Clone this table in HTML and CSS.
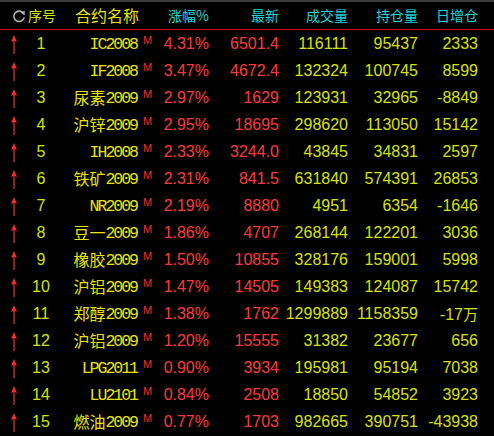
FILE: index.html
```html
<!DOCTYPE html>
<html>
<head>
<meta charset="utf-8">
<link rel="stylesheet" href="styles.css">
</head>
<body>
<div class="topbar"></div>
<div class="table">
  <div class="row head">
    <div class="c-arrow"><svg class="refresh" width="14" height="14" viewBox="0 0 14 14"><path d="M11.4 4.4 A5.2 5.2 0 1 0 12.2 8.4" fill="none" stroke="#b0b0b0" stroke-width="1.6"/><path d="M8.6 3.6 L12.8 1.8 L12.6 6.4 Z" fill="#b0b0b0"/></svg></div>
    <div class="c-idx">序号</div>
    <div class="c-name">合约名称</div>
    <div class="c-m"></div>
    <div class="c-pct">涨幅%</div>
    <div class="c-last">最新</div>
    <div class="c-vol">成交量</div>
    <div class="c-oi">持仓量</div>
    <div class="c-chg">日增仓</div>
  </div>
</div>
<div class="rows">
  <div class="row"><div class="c-arrow"><svg class="up" width="8" height="20" viewBox="0 0 8 20"><path d="M4 0 L7 7 L4.6 6 L4.6 19 L3.4 19 L3.4 6 L1 7 Z" fill="#f03030"/></svg></div><div class="c-idx">1</div><div class="c-name"><span class="a">IC2008</span></div><div class="c-m">M</div><div class="c-pct">4.31%</div><div class="c-last">6501.4</div><div class="c-vol">116111</div><div class="c-oi">95437</div><div class="c-chg">2333</div></div>
  <div class="row"><div class="c-arrow"><svg class="up" width="8" height="20" viewBox="0 0 8 20"><path d="M4 0 L7 7 L4.6 6 L4.6 19 L3.4 19 L3.4 6 L1 7 Z" fill="#f03030"/></svg></div><div class="c-idx">2</div><div class="c-name"><span class="a">IF2008</span></div><div class="c-m">M</div><div class="c-pct">3.47%</div><div class="c-last">4672.4</div><div class="c-vol">132324</div><div class="c-oi">100745</div><div class="c-chg">8599</div></div>
  <div class="row"><div class="c-arrow"><svg class="up" width="8" height="20" viewBox="0 0 8 20"><path d="M4 0 L7 7 L4.6 6 L4.6 19 L3.4 19 L3.4 6 L1 7 Z" fill="#f03030"/></svg></div><div class="c-idx">3</div><div class="c-name">尿素<span class="a">2009</span></div><div class="c-m">M</div><div class="c-pct">2.97%</div><div class="c-last">1629</div><div class="c-vol">123931</div><div class="c-oi">32965</div><div class="c-chg">-8849</div></div>
  <div class="row"><div class="c-arrow"><svg class="up" width="8" height="20" viewBox="0 0 8 20"><path d="M4 0 L7 7 L4.6 6 L4.6 19 L3.4 19 L3.4 6 L1 7 Z" fill="#f03030"/></svg></div><div class="c-idx">4</div><div class="c-name">沪锌<span class="a">2009</span></div><div class="c-m">M</div><div class="c-pct">2.95%</div><div class="c-last">18695</div><div class="c-vol">298620</div><div class="c-oi">113050</div><div class="c-chg">15142</div></div>
  <div class="row"><div class="c-arrow"><svg class="up" width="8" height="20" viewBox="0 0 8 20"><path d="M4 0 L7 7 L4.6 6 L4.6 19 L3.4 19 L3.4 6 L1 7 Z" fill="#f03030"/></svg></div><div class="c-idx">5</div><div class="c-name"><span class="a">IH2008</span></div><div class="c-m">M</div><div class="c-pct">2.33%</div><div class="c-last">3244.0</div><div class="c-vol">43845</div><div class="c-oi">34831</div><div class="c-chg">2597</div></div>
  <div class="row"><div class="c-arrow"><svg class="up" width="8" height="20" viewBox="0 0 8 20"><path d="M4 0 L7 7 L4.6 6 L4.6 19 L3.4 19 L3.4 6 L1 7 Z" fill="#f03030"/></svg></div><div class="c-idx">6</div><div class="c-name">铁矿<span class="a">2009</span></div><div class="c-m">M</div><div class="c-pct">2.31%</div><div class="c-last">841.5</div><div class="c-vol">631840</div><div class="c-oi">574391</div><div class="c-chg">26853</div></div>
  <div class="row"><div class="c-arrow"><svg class="up" width="8" height="20" viewBox="0 0 8 20"><path d="M4 0 L7 7 L4.6 6 L4.6 19 L3.4 19 L3.4 6 L1 7 Z" fill="#f03030"/></svg></div><div class="c-idx">7</div><div class="c-name"><span class="a">NR2009</span></div><div class="c-m">M</div><div class="c-pct">2.19%</div><div class="c-last">8880</div><div class="c-vol">4951</div><div class="c-oi">6354</div><div class="c-chg">-1646</div></div>
  <div class="row"><div class="c-arrow"><svg class="up" width="8" height="20" viewBox="0 0 8 20"><path d="M4 0 L7 7 L4.6 6 L4.6 19 L3.4 19 L3.4 6 L1 7 Z" fill="#f03030"/></svg></div><div class="c-idx">8</div><div class="c-name">豆一<span class="a">2009</span></div><div class="c-m">M</div><div class="c-pct">1.86%</div><div class="c-last">4707</div><div class="c-vol">268144</div><div class="c-oi">122201</div><div class="c-chg">3036</div></div>
  <div class="row"><div class="c-arrow"><svg class="up" width="8" height="20" viewBox="0 0 8 20"><path d="M4 0 L7 7 L4.6 6 L4.6 19 L3.4 19 L3.4 6 L1 7 Z" fill="#f03030"/></svg></div><div class="c-idx">9</div><div class="c-name">橡胶<span class="a">2009</span></div><div class="c-m">M</div><div class="c-pct">1.50%</div><div class="c-last">10855</div><div class="c-vol">328176</div><div class="c-oi">159001</div><div class="c-chg">5998</div></div>
  <div class="row"><div class="c-arrow"><svg class="up" width="8" height="20" viewBox="0 0 8 20"><path d="M4 0 L7 7 L4.6 6 L4.6 19 L3.4 19 L3.4 6 L1 7 Z" fill="#f03030"/></svg></div><div class="c-idx">10</div><div class="c-name">沪铝<span class="a">2009</span></div><div class="c-m">M</div><div class="c-pct">1.47%</div><div class="c-last">14505</div><div class="c-vol">149383</div><div class="c-oi">124087</div><div class="c-chg">15742</div></div>
  <div class="row"><div class="c-arrow"><svg class="up" width="8" height="20" viewBox="0 0 8 20"><path d="M4 0 L7 7 L4.6 6 L4.6 19 L3.4 19 L3.4 6 L1 7 Z" fill="#f03030"/></svg></div><div class="c-idx">11</div><div class="c-name">郑醇<span class="a">2009</span></div><div class="c-m">M</div><div class="c-pct">1.38%</div><div class="c-last">1762</div><div class="c-vol">1299889</div><div class="c-oi">1158359</div><div class="c-chg">-17<span class="w">万</span></div></div>
  <div class="row"><div class="c-arrow"><svg class="up" width="8" height="20" viewBox="0 0 8 20"><path d="M4 0 L7 7 L4.6 6 L4.6 19 L3.4 19 L3.4 6 L1 7 Z" fill="#f03030"/></svg></div><div class="c-idx">12</div><div class="c-name">沪铝<span class="a">2009</span></div><div class="c-m">M</div><div class="c-pct">1.20%</div><div class="c-last">15555</div><div class="c-vol">31382</div><div class="c-oi">23677</div><div class="c-chg">656</div></div>
  <div class="row"><div class="c-arrow"><svg class="up" width="8" height="20" viewBox="0 0 8 20"><path d="M4 0 L7 7 L4.6 6 L4.6 19 L3.4 19 L3.4 6 L1 7 Z" fill="#f03030"/></svg></div><div class="c-idx">13</div><div class="c-name"><span class="a">LPG2011</span></div><div class="c-m">M</div><div class="c-pct">0.90%</div><div class="c-last">3934</div><div class="c-vol">195981</div><div class="c-oi">95194</div><div class="c-chg">7038</div></div>
  <div class="row"><div class="c-arrow"><svg class="up" width="8" height="20" viewBox="0 0 8 20"><path d="M4 0 L7 7 L4.6 6 L4.6 19 L3.4 19 L3.4 6 L1 7 Z" fill="#f03030"/></svg></div><div class="c-idx">14</div><div class="c-name"><span class="a">LU2101</span></div><div class="c-m">M</div><div class="c-pct">0.84%</div><div class="c-last">2508</div><div class="c-vol">18850</div><div class="c-oi">54852</div><div class="c-chg">3923</div></div>
  <div class="row"><div class="c-arrow"><svg class="up" width="8" height="20" viewBox="0 0 8 20"><path d="M4 0 L7 7 L4.6 6 L4.6 19 L3.4 19 L3.4 6 L1 7 Z" fill="#f03030"/></svg></div><div class="c-idx">15</div><div class="c-name">燃油<span class="a">2009</span></div><div class="c-m">M</div><div class="c-pct">0.77%</div><div class="c-last">1703</div><div class="c-vol">982665</div><div class="c-oi">390751</div><div class="c-chg">-43938</div></div>
</div>
</body>
</html>
```
FILE: styles.css
```css
html, body {
  margin: 0;
  padding: 0;
  background: #000;
  overflow: hidden;
}
body {
  width: 494px;
  height: 436px;
  font-family: "Liberation Sans", Arial, "Noto Sans CJK SC", sans-serif;
}
.topbar {
  height: 2px;
  background: #3a3a3a;
}
.row {
  display: grid;
  grid-template-columns: 28px 26px 85px 14px 56px 70px 69px 70px 60px 16px;
  height: 27px;
  line-height: 27px;
  font-size: 16px;
  white-space: nowrap;
}
.head {
  border-bottom: 1px solid #d00000;
  font-family: "Noto Sans CJK SC", sans-serif;
  font-size: 14px;
  color: #1ed6d6;
}
.head > div {
  text-align: right;
}
.head .c-idx { text-align: center; }
.c-arrow {
  display: flex;
  align-items: center;
  justify-content: center;
}
.refresh { margin-left: 9px; margin-top: 1px; }
.up { margin-top: 1px; }
.c-idx {
  text-align: center;
  color: #d0e400;
}
.c-name {
  text-align: right;
  color: #e8e400;
  font-family: "Noto Sans CJK SC", sans-serif;
  font-size: 16px;
}
.c-name .a {
  font-family: "Liberation Mono", monospace;
  font-size: 16.5px;
  letter-spacing: -2px;
  margin-right: 2px;
  vertical-align: 1px;
}
.c-m {
  color: #f03030;
  font-size: 11px;
  line-height: 20px;
  padding-left: 4px;
}
.c-pct, .c-last { text-align: right; color: #ff3a3a; }
.c-vol, .c-oi, .c-chg { text-align: right; color: #d8e200; }
.head .c-pct, .head .c-last, .head .c-vol, .head .c-oi, .head .c-chg { color: #1ed6d6; }
.c-chg .w {
  font-family: "Noto Sans CJK SC", sans-serif;
  font-size: 15px;
}
```
